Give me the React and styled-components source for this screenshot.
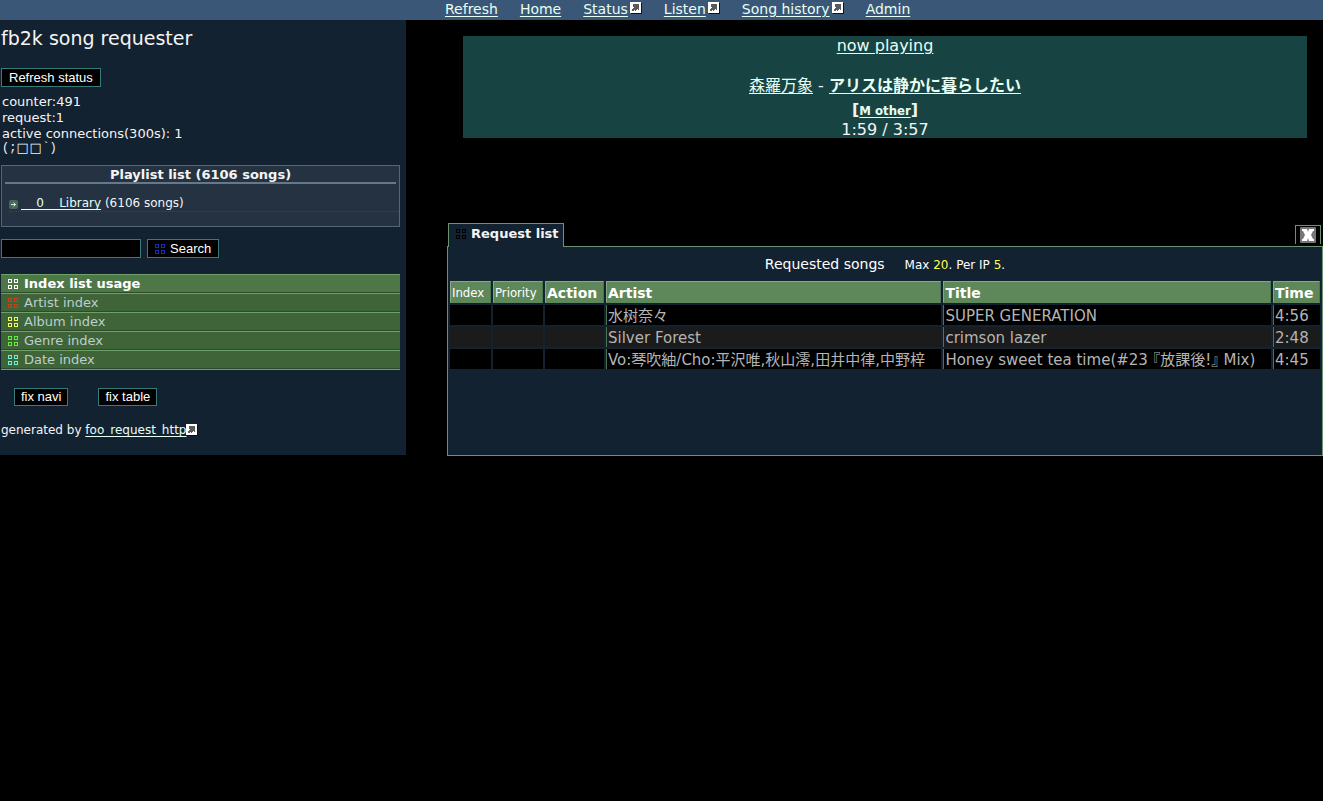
import React from "react";
import styled, { createGlobalStyle } from "styled-components";

const sans = `"DejaVu Sans", "Noto Sans CJK JP", sans-serif`;
const narrow = `"DejaVu Sans Condensed", "Noto Sans CJK JP", sans-serif`;
const ui = `"Liberation Sans", Arial, sans-serif`;

const GlobalStyle = createGlobalStyle`
  html { background: #fff; }
  body {
    margin: 0 1px 0 0;
    color: #f4f4f4;
    font: 13px/16px ${sans};
  }
  * { box-sizing: border-box; }
  h1, h2, p, ul { margin: 0; padding: 0; font-weight: normal; }
  ul { list-style: none; }
`;

const Page = styled.div`
  min-height: 100vh;
  background: #000;
`;

const Link = styled.a`
  color: #e8fff4;
  font-weight: ${(p) => (p.$bold ? "bold" : "inherit")};
  text-decoration: underline;
  text-underline-offset: 2px;
`;

const NavBar = styled.nav`
  display: flex;
  gap: 22px;
  height: 20px;
  padding-left: 445px;
  background: #3a5777;
  font-size: 14px;
  line-height: 18px;
  white-space: nowrap;
`;

const NavItem = styled.span`
  display: flex;
  gap: 2px;
`;

const IconSlot = styled.svg`
  display: block;
  flex: none;
  margin-top: ${(p) => p.$top || 0}px;
`;

const Columns = styled.div`
  display: flex;
  align-items: flex-start;
  gap: 41px;
`;

const Sidebar = styled.aside`
  flex: none;
  width: 406px;
  height: 435px;
  padding: 6px 6px 0 1px;
  background: #132231;
`;

const SiteTitle = styled.h1`
  margin-bottom: 18px;
  font-size: 19px;
  line-height: 24px;
`;

const Button = styled.button`
  display: inline-flex;
  align-items: center;
  gap: 5px;
  height: ${(p) => (p.$compact ? 18 : 19)}px;
  padding: 0 ${(p) => (p.$compact ? 6 : 7)}px;
  border: 1px solid #397a7a;
  border-radius: 0;
  background: #000;
  color: #fff;
  font: 13px/16px ${ui};
  white-space: nowrap;
`;

const StatusLines = styled.div`
  margin-top: 7px;
  padding-left: 1px;
`;

const Face = styled.p`
  display: flex;
  height: 12px;
  font: 12px/12px "Liberation Mono", monospace;
`;

const Box = styled.span`
  width: 13px;
  font: 13px/12px "DejaVu Sans", sans-serif;
`;

const Playlists = styled.section`
  height: 62px;
  margin-top: 11px;
  padding-top: 1px;
  border: 1px solid #54667a;
  background: #243242;
`;

const PlaylistsTitle = styled.h2`
  margin: 0 3px 11px;
  border-bottom: 2px solid #66798a;
  font-size: 13px;
  line-height: 15px;
  font-weight: bold;
  text-align: center;
`;

const PlaylistItem = styled.li`
  display: flex;
  align-items: center;
  gap: 3px;
  height: 17px;
  margin-left: 7px;
  border-bottom: 1px dotted #32475a;
  font-size: 12px;
  white-space: pre;
`;

const SearchForm = styled.form`
  display: flex;
  gap: 6px;
  margin-top: 12px;
`;

const SearchInput = styled.input`
  width: 140px;
  height: 19px;
  padding: 0 3px;
  border: 1px solid #397a7a;
  border-radius: 0;
  background: #000;
  color: #fff;
  font: 13px ${ui};
`;

const IndexList = styled.ul`
  margin-top: 16px;
  border-bottom: 1px solid #6f9f6b;
`;

const IndexItem = styled.li`
  display: flex;
  align-items: center;
  gap: 6px;
  height: 19px;
  padding-left: 7px;
  border-top: 1px solid #6f9f6b;
  border-bottom: 1px solid #2c4b2a;
  background: ${(p) => (p.$head ? "#4e7748" : "#3f6437")};
  color: ${(p) => (p.$head ? "#fff" : "#bccfd0")};
  font-weight: ${(p) => (p.$head ? "bold" : "normal")};
  line-height: 18px;
`;

const IndexLink = styled.a`
  color: inherit;
  text-decoration: none;
`;

const FixButtons = styled.div`
  display: flex;
  gap: 30px;
  margin: 18px 0 16px 13px;
`;

const Credit = styled.p`
  display: flex;
  font-size: 12px;
  white-space: pre;
`;

const Main = styled.main`
  flex: 1;
  min-width: 0;
`;

const NowPlaying = styled.section`
  height: 102px;
  margin: 16px 16px 85px;
  background: #174443;
  font-size: 16px;
  line-height: 20px;
  text-align: center;
`;

const SongLine = styled.p`
  margin-top: 18px;
  line-height: 24px;
`;

const AlbumLine = styled.p`
  font-weight: bold;
  line-height: 24px;
`;

const Album = styled(Link)`
  font: bold 13px/16px ${narrow};
`;

const Elapsed = styled.p`
  line-height: 16px;
`;

const TabRow = styled.div`
  display: flex;
  align-items: flex-end;
  justify-content: space-between;
  height: 23px;
  padding: 0 2px 0 1px;
`;

const Tab = styled.h2`
  position: relative;
  display: flex;
  align-items: center;
  gap: 5px;
  height: 24px;
  margin-bottom: -1px;
  padding: 0 4px 3px 7px;
  border: 1px solid #6b9370;
  border-bottom: 0;
  background: #132231;
  font-size: 13px;
  font-weight: bold;
`;

const CloseButton = styled.button`
  display: flex;
  justify-content: center;
  width: 26px;
  height: 19px;
  margin-bottom: 2px;
  padding: 1px 0 0;
  border: 1px solid #6b9370;
  border-bottom: 0;
  background: #000;
`;

const Panel = styled.section`
  height: 210px;
  border: 1px solid #6b9370;
  background: #132231;
`;

const Table = styled.table`
  width: 100%;
  table-layout: fixed;
  border-collapse: separate;
  border-spacing: 2px;
  color: #b4b4b4;
  font-size: 15px;
  line-height: 18px;
`;

const Caption = styled.caption`
  height: 32px;
  padding-top: 8px;
  color: #fff;
  font-size: 14px;
  line-height: 18px;
`;

const Limits = styled.small`
  margin-left: 20px;
  font-size: 12px;
`;

const Limit = styled.span`
  color: #ffff4a;
`;

const HeadCell = styled.th`
  height: 22px;
  padding: 2px 1px 0;
  border: solid;
  border-width: 1px;
  border-color: #86a883 #4c7450 #5f885a #86a883;
  background: #5f885a;
  color: #fff;
  text-align: left;
  font: ${(p) => (p.$small ? `13px/18px ${narrow}` : `bold 14px/18px ${sans}`)};
  white-space: nowrap;
`;

const Row = styled.tr`
  background: ${(p) => (p.$odd ? "#1b1b1b" : "#000")};
`;

const Cell = styled.td`
  height: 20px;
  padding: 2px 1px 0;
  border-left: ${(p) => (p.$edge ? "1px solid #4c7450" : "0")};
  overflow: hidden;
  white-space: nowrap;
`;

const Quote = styled.span`
  font-feature-settings: "halt" 1;
`;

function GridIcon({ color }) {
  return (
    <IconSlot width="10" height="10" viewBox="0 0 10 10" fill="none" stroke={color} shapeRendering="crispEdges" aria-hidden="true">
      <path d="M.5 .5h3v3h-3zM6.5 .5h3v3h-3zM.5 6.5h3v3h-3zM6.5 6.5h3v3h-3z" />
    </IconSlot>
  );
}

function ExternalIcon({ top }) {
  return (
    <IconSlot $top={top} width="12" height="12" viewBox="0 0 12 12" shapeRendering="crispEdges" aria-hidden="true">
      <path fill="#111" d="M1 1h11v11H1z" />
      <path fill="#fff" d="M0 0h11v11H0z" />
      <path fill="#5a5a5a" d="M3 2h6v6H8V7H7v1H6v1H2V7h1V6h1V5H3z" />
      <path fill="#fff" d="M4 8h1v1H4z" />
    </IconSlot>
  );
}

function ArrowIcon() {
  return (
    <IconSlot $top={3} width="9" height="9" viewBox="0 0 9 9" aria-hidden="true">
      <rect width="9" height="9" rx="2" fill="#47695d" />
      <path d="M2 4.5h5M4.5 2.5l2 2-2 2" stroke="#d4ecd8" fill="none" />
    </IconSlot>
  );
}

function CloseIcon() {
  return (
    <IconSlot width="16" height="16" viewBox="0 0 16 16" aria-hidden="true">
      <rect width="16" height="16" rx="1" fill="#777" />
      <path fill="#fff" d="M2 2h5l1 3 1-3h5v2h-1l-2 4 2 4h1v2H9l-1-3-1 3H2v-2h1l2-4-2-4H2z" />
    </IconSlot>
  );
}

const navItems = [
  ["Refresh"],
  ["Home"],
  ["Status", true],
  ["Listen", true],
  ["Song history", true],
  ["Admin"],
];

const indexes = [
  ["Artist index", "#d83c10"],
  ["Album index", "#f4f45a"],
  ["Genre index", "#62ec3c"],
  ["Date index", "#6ff0dc"],
];

const columns = [
  ["Index", "41px", true],
  ["Priority", "50px", true],
  ["Action", "59px"],
  ["Artist", "39%"],
  ["Title", "auto"],
  ["Time", "47px"],
];

const songs = [
  { artist: "水树奈々", title: "SUPER GENERATION", time: "4:56" },
  { artist: "Silver Forest", title: "crimson lazer", time: "2:48" },
  {
    artist: "Vo:琴吹紬/Cho:平沢唯,秋山澪,田井中律,中野梓",
    title: <>Honey sweet tea time(#23 <Quote>『放課後!』</Quote> Mix)</>,
    time: "4:45",
  },
];

export default function App() {
  return (
    <Page>
      <GlobalStyle />
      <NavBar>
        {navItems.map(([label, external]) => (
          <NavItem key={label}>
            <Link href="#">{label}</Link>
            {external && <ExternalIcon top={2} />}
          </NavItem>
        ))}
      </NavBar>
      <Columns>
        <Sidebar>
          <SiteTitle>fb2k song requester</SiteTitle>
          <Button type="button">Refresh status</Button>
          <StatusLines>
            <p>counter:491</p>
            <p>request:1</p>
            <p>active connections(300s): 1</p>
            <Face>(;<Box>□</Box><Box>□</Box>`)</Face>
          </StatusLines>
          <Playlists>
            <PlaylistsTitle>Playlist list (6106 songs)</PlaylistsTitle>
            <ul>
              <PlaylistItem>
                <ArrowIcon />
                <span>
                  <Link href="#">{"\u00a0\u00a0\u00a0\u00a00\u00a0\u00a0\u00a0\u00a0Library"}</Link> (6106 songs)
                </span>
              </PlaylistItem>
            </ul>
          </Playlists>
          <SearchForm onSubmit={(e) => e.preventDefault()}>
            <SearchInput type="text" aria-label="Search songs" />
            <Button type="submit"><GridIcon color="#1c2fb4" />Search</Button>
          </SearchForm>
          <IndexList>
            <IndexItem $head><GridIcon color="#fff" />Index list usage</IndexItem>
            {indexes.map(([label, color]) => (
              <IndexItem key={label}>
                <GridIcon color={color} />
                <IndexLink href="#">{label}</IndexLink>
              </IndexItem>
            ))}
          </IndexList>
          <FixButtons>
            <Button type="button" $compact>fix navi</Button>
            <Button type="button" $compact>fix table</Button>
          </FixButtons>
          <Credit>
            generated by <Link href="#">foo_request_http</Link>
            <ExternalIcon top={2} />
          </Credit>
        </Sidebar>
        <Main>
          <NowPlaying>
            <p><Link href="#">now playing</Link></p>
            <SongLine>
              <Link href="#">森羅万象</Link> - <Link href="#" $bold>アリスは静かに暮らしたい</Link>
            </SongLine>
            <AlbumLine>[<Album href="#">M other</Album>]</AlbumLine>
            <Elapsed>1:59 / 3:57</Elapsed>
          </NowPlaying>
          <TabRow>
            <Tab><GridIcon color="#000" />Request list</Tab>
            <CloseButton type="button" aria-label="Close"><CloseIcon /></CloseButton>
          </TabRow>
          <Panel>
            <Table>
              <Caption>
                Requested songs
                <Limits>Max <Limit>20</Limit>. Per IP <Limit>5</Limit>.</Limits>
              </Caption>
              <colgroup>
                {columns.map(([label, width]) => <col key={label} width={width} />)}
              </colgroup>
              <thead>
                <tr>
                  {columns.map(([label, , small]) => <HeadCell key={label} scope="col" $small={small}>{label}</HeadCell>)}
                </tr>
              </thead>
              <tbody>
                {songs.map((song, i) => (
                  <Row key={song.time} $odd={i % 2 === 1}>
                    <Cell /><Cell /><Cell />
                    <Cell $edge>{song.artist}</Cell>
                    <Cell $edge>{song.title}</Cell>
                    <Cell $edge>{song.time}</Cell>
                  </Row>
                ))}
              </tbody>
            </Table>
          </Panel>
        </Main>
      </Columns>
    </Page>
  );
}
